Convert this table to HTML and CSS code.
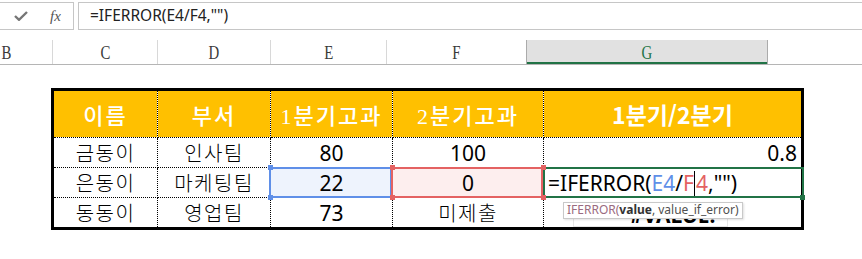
FILE: index.html
```html
<!DOCTYPE html>
<html lang="ko">
<head>
<meta charset="utf-8">
<link rel="stylesheet" href="styles.css">
</head>
<body>
<div class="fbar">
  <div class="fbtns">
    <svg class="check" viewBox="0 0 14 10"><polyline points="1,5 5,8.8 13,1" fill="none" stroke="#767676" stroke-width="2.4"/></svg>
    <span class="fx">fx</span>
  </div>
  <div class="finput">=IFERROR(E4/F4,"")</div>
</div>
<div class="colhdr">
  <div class="ch b"><span>B</span></div>
  <div class="ch"><span>C</span></div>
  <div class="ch"><span>D</span></div>
  <div class="ch"><span>E</span></div>
  <div class="ch f"><span>F</span></div>
  <div class="ch sel"><span>G</span></div>
  <div class="ch rest"></div>
</div>
<div class="tbl">
  <div class="c h"><span class="ht">이름</span></div>
  <div class="c h"><span class="ht">부서</span></div>
  <div class="c h"><span class="ht"><span class="sd">1</span>분기고과</span></div>
  <div class="c h"><span class="ht"><span class="sd">2</span>분기고과</span></div>
  <div class="c h"><span class="hb">1분기/2분기</span></div>

  <div class="c">금동이</div>
  <div class="c">인사팀</div>
  <div class="c n">80</div>
  <div class="c n">100</div>
  <div class="c n right">0.8</div>

  <div class="c">은동이</div>
  <div class="c">마케팅팀</div>
  <div class="c n selb">22<span class="hd tl blue"></span><span class="hd bl blue"></span></div>
  <div class="c n selr">0<span class="hd tl red"></span><span class="hd bl red"></span><span class="hd tr red"></span><span class="hd br red"></span></div>
  <div class="c edit"><span class="ftx">=IFERROR(<span class="fb">E4</span>/<span class="fr">F</span><span class="cur"></span><span class="fr">4</span>,"")</span><span class="hd br green"></span><span class="ghost"></span><div class="tip"><span class="tfn">IFERROR(</span><b>value</b>, value_if_error)</div></div>

  <div class="c last">동동이</div>
  <div class="c last">영업팀</div>
  <div class="c n last">73</div>
  <div class="c last">미제출</div>
  <div class="c last err">#VALUE!</div>
</div>
</body>
</html>
```
FILE: styles.css
```css
* { box-sizing: border-box; margin: 0; padding: 0; }
body {
  margin: 0;
  background: #fff;
  width: 862px;
  height: 259px;
  overflow: hidden;
  font-family: "Noto Sans", "Noto Sans CJK KR", sans-serif;
  color: #000;
}
.fbar { display: flex; padding-top: 2px; height: 30px; }
.fbtns {
  width: 75px; margin-left: -1px; height: 28px;
  border: 1px solid #c6c6c6;
  display: flex; align-items: center;
}
.check { margin-left: 14px; width: 14px; height: 10px; }
.fx {
  margin-left: 22px;
  font-family: "Liberation Serif", serif;
  font-style: italic; font-size: 15px; color: #555;
}
.finput {
  flex: 1; margin-left: 4px; height: 28px;
  border: 1px solid #c6c6c6; border-right: 0;
  padding-left: 11px;
  font-size: 15.5px; line-height: 25px; color: #222;
  white-space: nowrap;
}
.colhdr {
  margin-top: 10px;
  display: grid;
  grid-template-columns: 53px 105px 113px 116px 139px 242px 1fr;
  height: 25px;
  border-bottom: 1px solid #b5b5b5;
}
.ch {
  border-right: 1px solid #d8d8d8;
  display: flex; align-items: center; justify-content: center;
  font-family: "Liberation Serif", serif; font-size: 19px; color: #3a3a3a;
  padding-top: 2px;
}
.ch span { display: inline-block; transform: scaleX(0.78); }
.ch.b { justify-content: flex-start; padding-left: 0; }
.ch.f { border-right: 0; }
.ch.sel {
  background: #e1e1e1;
  border-left: 1px solid #ababab; border-right: 1px solid #ababab;
  box-shadow: inset 0 -2px #217346;
  color: #217346;
}
.ch.rest { border: 0; }

.tbl {
  margin-top: 23px; margin-left: 51px;
  width: 753px;
  border: 3px solid #000;
  background: #fff;
  display: grid;
  grid-template-columns: 104px 113px 122px 151px 1fr;
}
.c {
  height: 30px;
  border-right: 1px dotted #000;
  border-bottom: 1px dotted #000;
  display: flex; align-items: center; justify-content: center;
  font-family: "Noto Sans CJK KR", sans-serif;
  font-size: 20px; font-weight: 300; letter-spacing: 1.5px;
  white-space: nowrap;
}
.c:nth-child(5n) { border-right: 0; }
.c.last { height: 29px; border-bottom: 0; }
.h {
  height: 47px;
  background: #ffc000; background-clip: padding-box;
  color: #fff;
}
.ht { font-size: 22px; font-weight: 500; letter-spacing: 2px; }
.sd { font-family: "Liberation Serif", serif; font-weight: 400; }
.hb { font-size: 23px; font-weight: 700; letter-spacing: 0; }
.n { font-family: "Noto Sans", sans-serif; font-size: 21px; font-weight: 400; letter-spacing: 0; }
.right { justify-content: flex-end; padding-right: 4px; }

.selb, .selr, .edit { position: relative; }
.selb { background: #eef3fd; }
.selr { background: #fdeeee; }
.selb::after, .selr::after, .edit::after {
  content: ""; position: absolute; z-index: 2;
  top: -1px; bottom: -1px;
}
.selb::after { left: -2px; right: 0; border: 2px solid #5f8fe8; }
.selr::after { left: -2px; right: 0; border: 2px solid #e46262; }
.edit::after { left: -1px; right: -3px; border: 2px solid #217346; }
.hd { position: absolute; width: 5px; height: 5px; z-index: 3; }
.hd.blue { background: #5f8fe8; }
.hd.red { background: #e46262; }
.hd.green { background: #217346; }
.hd.tl { left: -3px; top: -3px; }
.hd.bl { left: -3px; bottom: -3px; }
.hd.tr { right: -3px; top: -3px; }
.hd.br { right: -3px; bottom: -3px; }
.edit .hd.br { right: -4px; bottom: -3px; }

.edit { justify-content: flex-start; padding-left: 4px; }
.ftx { font-family: "Noto Sans", sans-serif; font-size: 21px; font-weight: 400; letter-spacing: 0; line-height: 28px; }
.fb { color: #5f8fe8; }
.fr { color: #e46262; }
.cur { display: inline-block; width: 1px; height: 26px; background: #000; vertical-align: -6px; margin: 0 1px 0 0; }

.tip {
  position: absolute; z-index: 5;
  left: 19px; top: 34px;
  height: 17px;
  padding: 0 3px;
  background: #fff;
  border: 1px solid #c9c9c9;
  box-shadow: 1px 1px 2px rgba(0,0,0,0.12);
  font-family: "Noto Sans", sans-serif;
  font-size: 12px; font-weight: 400; line-height: 14px; letter-spacing: 0;
  color: #505050;
}
.tip b { color: #333; font-weight: 700; }
.tfn { color: #9a6b80; }
.ghost {
  position: absolute; z-index: 1;
  left: 29px; top: 42px; width: 155px; height: 17px;
  border: 1px solid #e6e6e6; border-top: 0;
}
.err { font-family: "Noto Sans", sans-serif; font-weight: 700; font-size: 21px; letter-spacing: 0; padding-top: 4px; }
```
